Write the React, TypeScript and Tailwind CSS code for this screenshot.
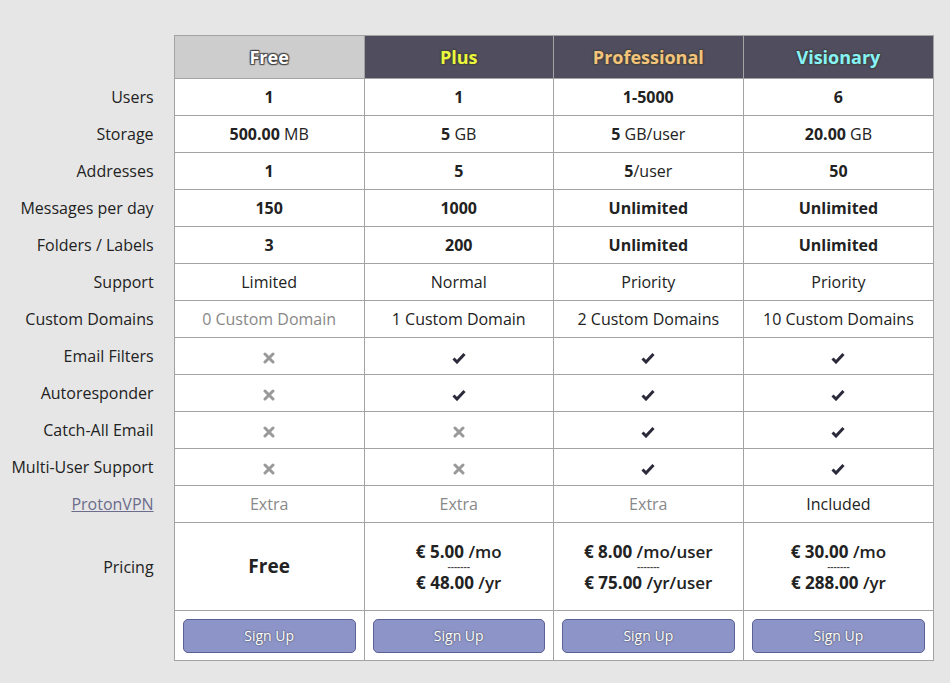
import React from "react";

const X = () => (
  <svg width="12" height="12" viewBox="0 0 12 12" className="inline-block"><path d="M2 2L10 10M10 2L2 10" stroke="#999" strokeWidth="3" strokeLinecap="round" /></svg>
);
const C = () => (
  <svg width="14" height="12" viewBox="0 0 14 12" className="inline-block"><path d="M1.5 6.5L5 10L12.5 2" stroke="#2a2a3a" strokeWidth="3" fill="none" /></svg>
);

const B = ({ b, r }: { b: string; r?: string }) => (
  <span><b className="font-bold">{b}</b>{r ? <span className="font-normal">{r}</span> : null}</span>
);

const rows: [React.ReactNode, React.ReactNode[]][] = [
  ["Users", [<B b="1" />, <B b="1" />, <B b="1-5000" />, <B b="6" />]],
  ["Storage", [<B b="500.00" r=" MB" />, <B b="5" r=" GB" />, <B b="5" r=" GB/user" />, <B b="20.00" r=" GB" />]],
  ["Addresses", [<B b="1" />, <B b="5" />, <B b="5" r="/user" />, <B b="50" />]],
  ["Messages per day", [<B b="150" />, <B b="1000" />, <B b="Unlimited" />, <B b="Unlimited" />]],
  ["Folders / Labels", [<B b="3" />, <B b="200" />, <B b="Unlimited" />, <B b="Unlimited" />]],
  ["Support", ["Limited", "Normal", "Priority", "Priority"]],
  ["Custom Domains", [<span className="text-[#888]">0 Custom Domain</span>, "1 Custom Domain", "2 Custom Domains", "10 Custom Domains"]],
  ["Email Filters", [<X />, <C />, <C />, <C />]],
  ["Autoresponder", [<X />, <C />, <C />, <C />]],
  ["Catch-All Email", [<X />, <X />, <C />, <C />]],
  ["Multi-User Support", [<X />, <X />, <C />, <C />]],
  [<span className="text-[#6c6c8c] underline">ProtonVPN</span>, [<span className="text-[#888]">Extra</span>, <span className="text-[#888]">Extra</span>, <span className="text-[#888]">Extra</span>, "Included"]],
];

const Price = ({ m, mu, y, yu }: { m: string; mu: string; y: string; yu: string }) => (
  <div className="font-semibold text-[17px] text-[#222] flex flex-col items-center">
    <div className="leading-[21px]"><b className="font-bold">{m}</b> {mu}</div>
    <div className="text-[10px] leading-[10px] h-[10px] text-[#444] overflow-hidden">-------</div>
    <div className="leading-[21px]"><b className="font-bold">{y}</b> {yu}</div>
  </div>
);

const cell = "border border-[#a3a3a3] text-center bg-white";
const shadow = "[text-shadow:1px_1px_1px_#444,-1px_-1px_1px_#444,1px_-1px_1px_#444,-1px_1px_1px_#444]";

export default function App() {
  return (
    <div className="min-h-[683px] w-[950px] bg-[#e6e6e6] pt-[35px] text-[#222] text-[16px]" style={{ fontFamily: '"Open Sans", sans-serif' }}>
      <table className="border-collapse table-fixed ml-0 w-[934px]">
        <colgroup>
          <col className="w-[174px]" />
          <col className="w-[190px]" />
          <col className="w-[189px]" />
          <col className="w-[190px]" />
          <col className="w-[190px]" />
        </colgroup>
        <thead>
          <tr className="h-[43px]">
            <th></th>
            <th className={`border border-[#a3a3a3] bg-[#cdcdcd] text-white text-[18px] font-bold ${shadow}`}>Free</th>
            <th className={`border border-[#a3a3a3] bg-[#4f4d5e] text-[#eaf73c] text-[18px] font-bold ${shadow}`}>Plus</th>
            <th className={`border border-[#a3a3a3] bg-[#4f4d5e] text-[#f3c47a] text-[18px] font-bold ${shadow}`}>Professional</th>
            <th className={`border border-[#a3a3a3] bg-[#4f4d5e] text-[#86f3f6] text-[18px] font-bold ${shadow}`}>Visionary</th>
          </tr>
        </thead>
        <tbody>
          {rows.map(([l, cs], i) => (
            <tr key={i} className="h-[37px]">
              <td className="text-right pr-[20px] whitespace-nowrap">{l}</td>
              {cs.map((c, j) => <td key={j} className={cell}>{c}</td>)}
            </tr>
          ))}
          <tr className="h-[88px]">
            <td className="text-right pr-[20px]">Pricing</td>
            <td className={cell}><span className="font-bold text-[19px]">Free</span></td>
            <td className={cell}><Price m="€ 5.00" mu="/mo" y="€ 48.00" yu="/yr" /></td>
            <td className={cell}><Price m="€ 8.00" mu="/mo/user" y="€ 75.00" yu="/yr/user" /></td>
            <td className={cell}><Price m="€ 30.00" mu="/mo" y="€ 288.00" yu="/yr" /></td>
          </tr>
          <tr className="h-[50px]">
            <td></td>
            {[0, 1, 2, 3].map((k) => (
              <td key={k} className={`${cell} px-[8px]`}>
                <div className="h-[34px] rounded-[5px] bg-[#8d95c8] border border-[#5d6296] flex items-center justify-center text-white text-[14px] [text-shadow:0_0_2px_#333]">Sign Up</div>
              </td>
            ))}
          </tr>
        </tbody>
      </table>
    </div>
  );
}
